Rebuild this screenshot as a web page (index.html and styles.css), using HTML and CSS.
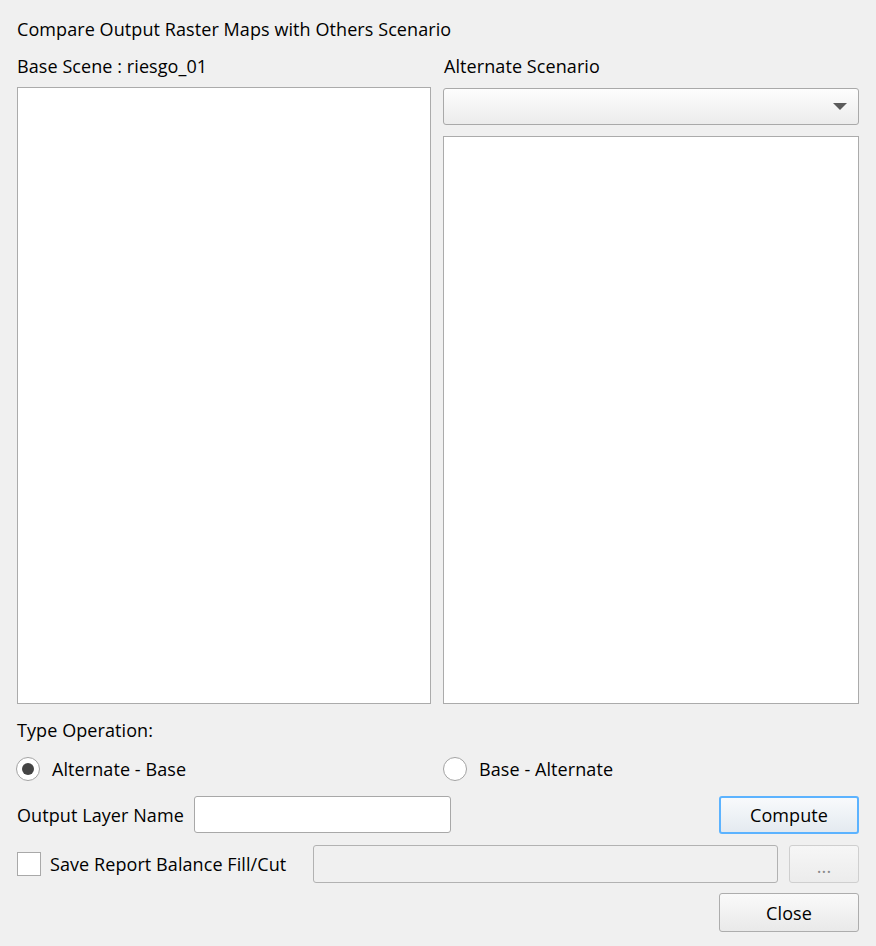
FILE: index.html
```html
<!DOCTYPE html>
<html>
<head>
<meta charset="utf-8">
<link rel="stylesheet" href="styles.css">
</head>
<body>
<div class="dialog">
  <div class="title">Compare Output Raster Maps with Others Scenario</div>
  <div class="panes">
    <div class="label">Base Scene : riesgo_01</div>
    <div class="label">Alternate Scenario</div>
    <div class="listbox left-list"></div>
    <div class="right-col">
      <div class="combo">
        <svg class="arrow" width="14" height="8" viewBox="0 0 14 8"><path d="M0 0H14L7 7Z" fill="#5b5b5b"/></svg>
      </div>
      <div class="listbox right-list"></div>
    </div>
  </div>
  <div class="section-label">Type Operation:</div>
  <div class="radios">
    <label class="radio-item"><span class="radio checked"><span class="dot"></span></span><span>Alternate - Base</span></label>
    <label class="radio-item"><span class="radio"></span><span>Base - Alternate</span></label>
  </div>
  <div class="output-row">
    <span class="out-label">Output Layer Name</span>
    <div class="lineedit out-edit"></div>
    <div class="spacer"></div>
    <div class="button primary">Compute</div>
  </div>
  <div class="save-row">
    <span class="checkbox"></span>
    <span class="save-label">Save Report Balance Fill/Cut</span>
    <div class="lineedit disabled path-edit"></div>
    <div class="button disabled dots">...</div>
  </div>
  <div class="close-row">
    <div class="button">Close</div>
  </div>
</div>
</body>
</html>
```

FILE: styles.css
```css
html, body {
  margin: 0;
  padding: 0;
  background: #f0f0f0;
}
body {
  font-family: "Open Sans", "Noto Sans", "Liberation Sans", sans-serif;
  font-size: 18px;
  letter-spacing: 0.08px;
  color: #000;
  width: 876px;
  height: 946px;
  overflow: hidden;
}
.dialog {
  padding: 16px 17px 0 17px;
  display: flex;
  flex-direction: column;
}
.title {
  height: 26px;
  line-height: 26px;
  white-space: nowrap;
}
.panes {
  margin-top: 11px;
  display: grid;
  grid-template-columns: 414px 416px;
  grid-template-rows: 26px auto;
  column-gap: 12px;
  row-gap: 8px;
}
.label {
  line-height: 26px;
  white-space: nowrap;
}
.label:nth-child(2) {
  padding-left: 1px;
}
.listbox {
  background: #fff;
  border: 1px solid #ababab;
  box-sizing: border-box;
}
.left-list {
  height: 617px;
}
.right-col {
  display: flex;
  flex-direction: column;
}
.combo {
  margin-top: 1px;
  height: 37px;
  box-sizing: border-box;
  border: 1px solid #a9a9a9;
  border-radius: 3px;
  background: linear-gradient(#fdfdfd, #ececec);
  display: flex;
  align-items: center;
  justify-content: flex-end;
  padding-right: 11px;
}
.arrow {
  display: block;
}
.right-list {
  margin-top: 11px;
  height: 568px;
}
.section-label {
  margin-top: 13px;
  height: 26px;
  line-height: 26px;
}
.radios {
  margin-top: 13px;
  height: 26px;
  display: grid;
  grid-template-columns: 427px 416px;
}
.radio-item {
  display: flex;
  align-items: center;
  gap: 12px;
  margin-left: -1px;
}
.radio {
  width: 24px;
  height: 24px;
  box-sizing: border-box;
  border: 1px solid #a3a3a3;
  border-radius: 50%;
  background: #fff;
  display: flex;
  align-items: center;
  justify-content: center;
}
.dot {
  width: 12px;
  height: 12px;
  border-radius: 50%;
  background: #444;
}
.output-row {
  margin-top: 14px;
  height: 38px;
  display: flex;
  align-items: center;
}
.out-label {
  width: 177px;
  white-space: nowrap;
}
.lineedit {
  box-sizing: border-box;
  border: 1px solid #a8a8a8;
  border-radius: 3px;
  background: #fff;
}
.out-edit {
  width: 257px;
  height: 37px;
  align-self: flex-start;
}
.spacer {
  flex: 1;
}
.button {
  width: 140px;
  height: 38px;
  box-sizing: border-box;
  border: 1px solid #adadad;
  border-radius: 3px;
  background: linear-gradient(#fafafa, #e9e9e9);
  display: flex;
  align-items: center;
  justify-content: center;
}
.button.primary {
  border: 2px solid #5cb3ff;
  background: linear-gradient(#f8fafc, #e4eaf0);
}
.save-row {
  margin-top: 11px;
  height: 38px;
  display: flex;
  align-items: center;
}
.checkbox {
  width: 24px;
  height: 24px;
  box-sizing: border-box;
  border: 1px solid #a9a9a9;
  background: #fff;
  margin-right: 9px;
}
.save-label {
  width: 263px;
  white-space: nowrap;
}
.lineedit.disabled {
  background: #f0f0f0;
  border-color: #b2b2b2;
}
.path-edit {
  width: 465px;
  height: 38px;
}
.button.dots {
  margin-left: 11px;
  width: 70px;
  border-color: #cfcfcf;
  background: linear-gradient(#f6f6f6, #ececec);
  color: #8a8a8a;
  padding-top: 4px;
}
.close-row {
  margin-top: 10px;
  display: flex;
  justify-content: flex-end;
}
.close-row .button {
  height: 39px;
}
```
